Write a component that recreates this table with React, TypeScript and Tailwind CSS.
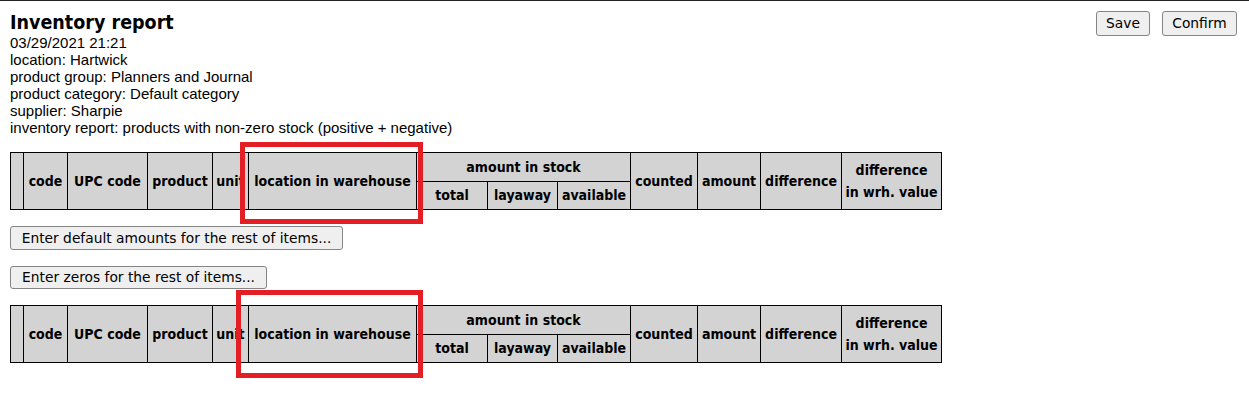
const headFont = "font-['DejaVu_Sans_Condensed','DejaVu_Sans',sans-serif]";

const cols = [13, 44, 80, 65, 36, 168, 71, 70, 73, 67, 63, 81, 100];

function ReportTable() {
  const th = `border border-black bg-[#d3d3d3] px-[3px] text-center align-middle font-bold text-[14px] text-black whitespace-nowrap ${headFont}`;
  return (
    <table className="table-fixed border-collapse border border-black" style={{ width: 932 }}>
      <colgroup>
        {cols.map((w, i) => (
          <col key={i} style={{ width: w }} />
        ))}
      </colgroup>
      <thead>
        <tr className="h-[29px]">
          <th rowSpan={2} className={th} />
          <th rowSpan={2} className={th}>code</th>
          <th rowSpan={2} className={th}>UPC code</th>
          <th rowSpan={2} className={th}>product</th>
          <th rowSpan={2} className={`${th} overflow-hidden`}>unit</th>
          <th rowSpan={2} className={th}>location in warehouse</th>
          <th colSpan={3} className={th}>amount in stock</th>
          <th rowSpan={2} className={th}>counted</th>
          <th rowSpan={2} className={th}>amount</th>
          <th rowSpan={2} className={th}>difference</th>
          <th rowSpan={2} className={`${th} leading-[22px]`}>
            difference
            <br />
            in wrh. value
          </th>
        </tr>
        <tr className="h-[28px]">
          <th className={th}>total</th>
          <th className={th}>layaway</th>
          <th className={th}>available</th>
        </tr>
      </thead>
    </table>
  );
}

function Btn({ label, className }: { label: string; className: string }) {
  return (
    <button
      className={`flex items-center justify-center rounded-[3px] border border-[#858585] bg-[#efefef] text-[13.8px] text-black font-['DejaVu_Sans',sans-serif] ${className}`}
    >
      {label}
    </button>
  );
}

export default function App() {
  return (
    <div className="relative min-h-[401px] border-t border-[#222] bg-white px-[10px] pt-[10px] text-black">
      <div className="flex items-start justify-between">
        <div>
          <h1 className={`font-bold text-[19.5px] leading-[23px] ${headFont}`}>Inventory report</h1>
          <div className="font-['Liberation_Sans',Arial,sans-serif] text-[15px] leading-[17px]">
            <p>03/29/2021 21:21</p>
            <p>location: Hartwick</p>
            <p>product group: Planners and Journal</p>
            <p>product category: Default category</p>
            <p>supplier: Sharpie</p>
            <p>inventory report: products with non-zero stock (positive + negative)</p>
          </div>
        </div>
        <div className="mr-[2px] flex gap-[12px]">
          <Btn label="Save" className="h-[25px] w-[54px]" />
          <Btn label="Confirm" className="h-[25px] w-[75px]" />
        </div>
      </div>

      <div className="mt-[16px]">
        <ReportTable />
      </div>

      <Btn label="Enter default amounts for the rest of items..." className="mt-[16px] h-[24px] w-[333px]" />
      <Btn label="Enter zeros for the rest of items..." className="mt-[16px] h-[23px] w-[257px]" />

      <div className="mt-[16px]">
        <ReportTable />
      </div>

      {/* highlight boxes */}
      <div className="pointer-events-none absolute left-[240px] top-[141px] h-[82px] w-[183px] border-[5px] border-[#e31e24]" />
      <div className="pointer-events-none absolute left-[236px] top-[289px] h-[88px] w-[187px] border-[5px] border-[#e31e24]" />
    </div>
  );
}
